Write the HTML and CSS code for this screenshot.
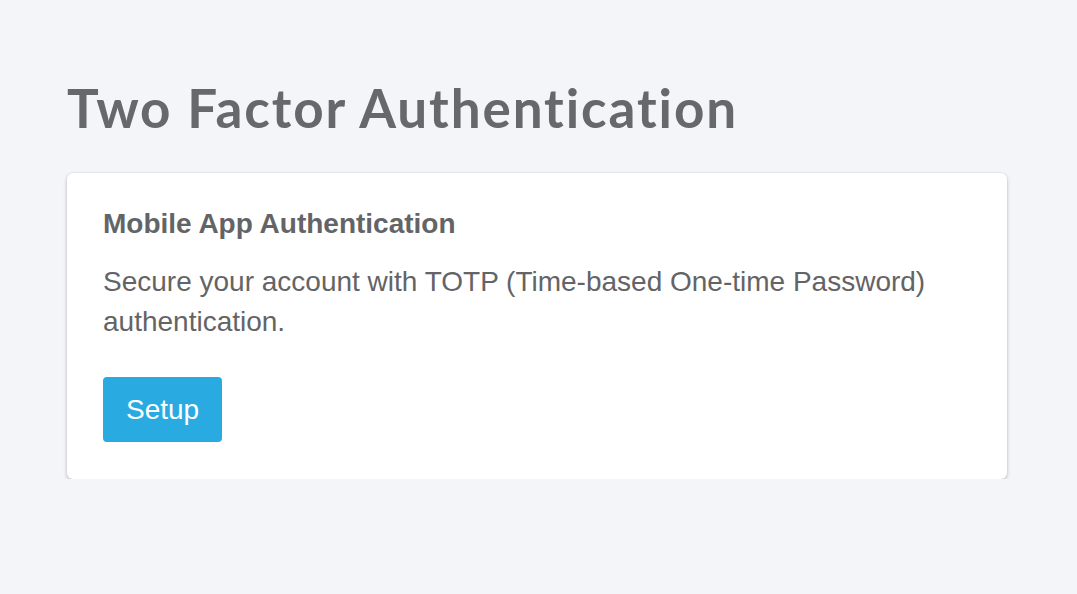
FILE: index.html
```
<!DOCTYPE html>
<html>
<head>
<meta charset="utf-8">
<link rel="stylesheet" href="styles.css">
</head>
<body>
<main class="page">
  <h1 class="title">Two Factor Authentication</h1>
  <section class="card">
    <h2 class="card-title">Mobile App Authentication</h2>
    <p class="card-text">Secure your account with TOTP (Time-based One-time Password) authentication.</p>
    <button class="btn" type="button">Setup</button>
  </section>
</main>
</body>
</html>
```
FILE: styles.css
```
html, body {
  margin: 0;
  padding: 0;
  background: #f4f5f9;
}
body {
  font-family: "Liberation Sans", Arial, sans-serif;
  color: #636466;
}
.page {
  padding: 76px 70px 0 67px;
  width: 940px;
}
.title {
  font-family: Lato, "Noto Sans", sans-serif;
  font-weight: 700;
  font-size: 53px;
  line-height: 64px;
  letter-spacing: 1.9px;
  font-variant-ligatures: none;
  color: #67686b;
  margin: 0 0 33px 0;
}
.card {
  background: #fff;
  border-radius: 6px;
  box-shadow: 0 2px 4px rgba(0, 0, 0, 0.2), 0 0 2px rgba(0, 0, 0, 0.12);
  padding: 35px 36px 37px 36px;
}
.card-title {
  font-size: 28px;
  font-weight: 700;
  margin: 0 0 22px 0;
  line-height: 32px;
  color: #636466;
}
.card-text {
  font-size: 28px;
  line-height: 40px;
  margin: 0 0 35px 0;
  color: #636466;
}
.btn {
  display: block;
  background: #29abe2;
  color: #fff;
  border: none;
  border-radius: 4px;
  font-family: "Liberation Sans", Arial, sans-serif;
  font-size: 28px;
  padding: 0 23px;
  height: 65px;
  cursor: pointer;
}
```
